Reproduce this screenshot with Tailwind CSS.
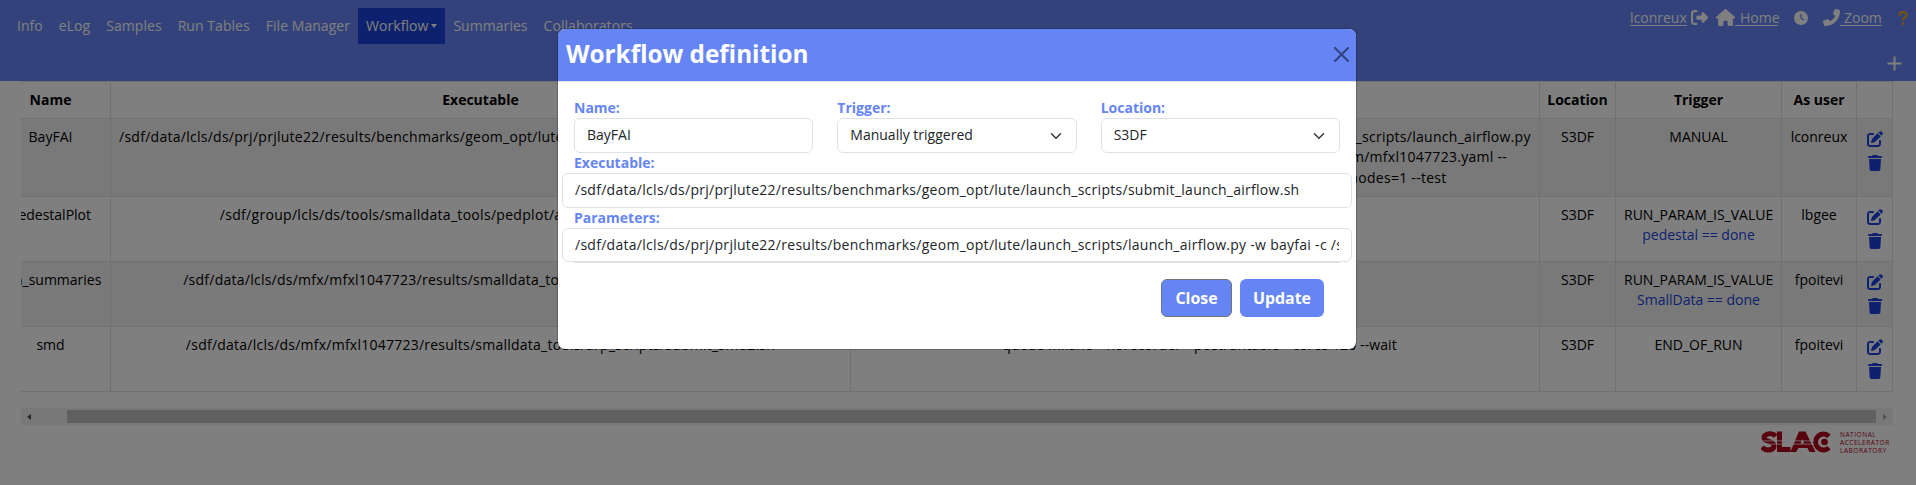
<!DOCTYPE html>
<html lang="en">
<head>
<meta charset="utf-8">
<title>Workflow definitions</title>
<script src="https://cdn.jsdelivr.net/npm/@tailwindcss/browser@4"></script>
</head>
<body class="bg-white">
<svg class="hidden">
  <symbol id="edit" viewBox="0 0 512 512"><path d="M471.6 21.7c-21.9-21.9-57.3-21.9-79.2 0L362.3 51.7l97.9 97.9 30.1-30.1c21.9-21.9 21.9-57.3 0-79.2L471.6 21.7zm-299.2 220c-6.1 6.1-10.8 13.6-13.5 21.9l-29.6 88.8c-2.9 8.6-.6 18.1 5.8 24.6s15.9 8.7 24.6 5.8l88.8-29.6c8.2-2.7 15.7-7.4 21.9-13.5L437.7 172.3 339.7 74.3 172.4 241.7zM96 64C43 64 0 107 0 160V416c0 53 43 96 96 96H352c53 0 96-43 96-96V320c0-17.7-14.3-32-32-32s-32 14.3-32 32v96c0 17.7-14.3 32-32 32H96c-17.7 0-32-14.3-32-32V160c0-17.7 14.3-32 32-32h96c17.7 0 32-14.3 32-32s-14.3-32-32-32H96z"/></symbol>
  <symbol id="trash" viewBox="0 0 448 512"><path d="M135.2 17.7L128 32H32C14.3 32 0 46.3 0 64S14.3 96 32 96H416c17.7 0 32-14.3 32-32s-14.3-32-32-32H320l-7.2-14.3C307.4 6.8 296.3 0 284.2 0H163.8c-12.1 0-23.2 6.8-28.6 17.7zM416 128H32L53.2 467c1.6 25.3 22.6 45 47.9 45H346.9c25.3 0 46.3-19.7 47.9-45L416 128z"/></symbol>
</svg>
<div class="relative h-[485px] w-full overflow-hidden font-['Open_Sans','Noto_Sans',sans-serif] text-[14px] leading-[20.3px] text-black">

  <!-- Navigation bar -->
  <nav class="flex h-[81px] items-start justify-between bg-[#6685f5] text-white">
    <div class="flex pt-2 pl-[9px] tracking-[0.05px]">
      <span class="px-2 py-[8px]">Info</span>
      <span class="px-2 py-[8px]">eLog</span>
      <span class="px-2 py-[8px]">Samples</span>
      <span class="px-2 py-[8px]">Run Tables</span>
      <span class="px-2 py-[8px]">File Manager</span>
      <span class="flex h-[36px] items-center gap-[3px] bg-[#1c43dc] px-2"><span>Workflow</span><span class="border-x-[3.5px] border-t-4 border-x-transparent border-t-white"></span></span>
      <span class="px-2 py-[8px]">Summaries</span>
      <span class="px-2 py-[8px]">Collaborators</span>
    </div>
    <div class="flex w-[290px] flex-col pt-[9px]">
      <div class="flex items-center">
        <span class="ml-1 h-[17px] w-[57px] border-b border-white leading-[18px]">lconreux</span>
        <svg class="ml-[4px] h-[17px] w-[17px] fill-white" viewBox="0 0 512 512"><path d="M377.9 105.9L500.7 228.7c7.2 7.2 11.3 17.1 11.3 27.3s-4.1 20.1-11.3 27.3L377.9 406.1c-6.4 6.4-15 9.9-24 9.9c-18.7 0-33.9-15.2-33.9-33.9l0-62.1-128 0c-17.7 0-32-14.3-32-32l0-64c0-17.7 14.3-32 32-32l128 0 0-62.1c0-18.7 15.2-33.9 33.9-33.9c9 0 17.6 3.6 24 9.9zM160 96L96 96c-17.7 0-32 14.3-32 32l0 256c0 17.7 14.3 32 32 32l64 0c17.7 0 32 14.3 32 32s-14.3 32-32 32l-64 0c-53 0-96-43-96-96L0 128C0 75 43 32 96 32l64 0c17.7 0 32 14.3 32 32s-14.3 32-32 32z"/></svg>
        <svg class="ml-[8px] h-[17px] w-[19px] fill-white" viewBox="0 0 576 512"><path d="M575.8 255.5c0 18-15 32.1-32 32.1h-32l.7 160.2c0 2.7-.2 5.4-.5 8.1V472c0 22.1-17.9 40-40 40H456c-1.1 0-2.2 0-3.3-.1c-1.4 .1-2.8 .1-4.2 .1H416 392c-22.1 0-40-17.9-40-40V448 384c0-17.7-14.3-32-32-32H256c-17.7 0-32 14.3-32 32v64 24c0 22.1-17.9 40-40 40H160 128.1c-1.5 0-3-.1-4.5-.2c-1.2 .1-2.4 .2-3.6 .2H104c-22.1 0-40-17.9-40-40V360c0-.9 0-1.9 .1-2.8V287.6H32c-18 0-32-14-32-32.1c0-9 3-17 10-24L266.4 8c7-7 15-8 22-8s15 2 21 7L564.8 231.5c8 7 12 15 11 24z"/></svg>
        <span class="h-[17px] w-[43px] border-b border-white pl-[5px] leading-[18px]">Home</span>
        <svg class="ml-[16px] h-[14px] w-[14px] fill-white" viewBox="0 0 512 512"><path d="M256 0a256 256 0 1 1 0 512A256 256 0 1 1 256 0zM232 120V256c0 8 4 15.5 10.7 20l96 64c11 7.4 25.9 4.4 33.3-6.7s4.4-25.9-6.7-33.3L280 243.2V120c0-13.3-10.7-24-24-24s-24 10.7-24 24z"/></svg>
        <svg class="ml-[15px] h-[17px] w-[17px] -scale-x-100 fill-white" viewBox="0 0 512 512"><path d="M164.9 24.6c-7.7-18.6-28-28.5-47.4-23.2l-88 24C12.1 30.2 0 46 0 64C0 311.4 200.6 512 448 512c18 0 33.8-12.1 38.6-29.5l24-88c5.3-19.4-4.6-39.7-23.2-47.4l-96-40c-16.3-6.8-35.2-2.1-46.3 11.6L304.7 368C234.3 334.7 177.3 277.7 144 207.3L193.3 167c13.7-11.2 18.4-30 11.6-46.3l-40-96z"/></svg>
        <span class="h-[17px] w-[42px] border-b border-white pl-[4px] leading-[18px]">Zoom</span>
        <svg class="ml-[16px] h-[16px] w-[10px] fill-[#fba400]" viewBox="0 0 320 512"><path d="M80 160c0-35.3 28.7-64 64-64h32c35.3 0 64 28.7 64 64v3.6c0 21.8-11.1 42.1-29.4 53.8l-42.2 27.1c-25.2 16.2-40.4 44.1-40.4 74V320c0 17.7 14.3 32 32 32s32-14.3 32-32v-1.4c0-8.2 4.2-15.8 11-20.2l42.2-27.1c36.6-23.6 58.8-64.1 58.8-107.7V160c0-70.7-57.3-128-128-128H144C73.3 32 16 89.3 16 160c0 17.7 14.3 32 32 32s32-14.3 32-32zm80 320a40 40 0 1 0 0-80 40 40 0 1 0 0 80z"/></svg>
      </div>
      <svg class="mt-[30px] ml-[261px] h-[15px] w-[15px] fill-none stroke-white stroke-2" viewBox="0 0 15 15"><path d="M7.5 .5v14M.5 7.5h14"/></svg>
    </div>
  </nav>

  <!-- Definitions table, scrolled sideways -->
  <div class="ml-[21px] w-[1872px] overflow-hidden">
    <table class="-ml-[30px] w-[1902px] table-fixed border-separate border-spacing-0 border-t border-[#dee2e6] text-center [&_td]:border-r [&_td]:border-b [&_td]:border-[#dee2e6] [&_td]:p-2 [&_td]:align-top [&_th]:border-r [&_th]:border-b [&_th]:border-[#dee2e6] [&_td]:whitespace-nowrap">
      <colgroup><col class="w-[120px]"><col class="w-[740px]"><col class="w-[689px]"><col class="w-[76px]"><col class="w-[166px]"><col class="w-[75px]"><col class="w-[36px]"></colgroup>
      <tr class="h-[37px] font-bold"><th>Name</th><th>Executable</th><th>Parameters</th><th>Location</th><th>Trigger</th><th>As user</th><th></th></tr>
      <tr class="h-[78px] bg-[#f2f2f2]">
        <td>BayFAI</td>
        <td><span class="tracking-[0.27px]">/sdf/data/lcls/ds/prj/prjlute22/results/benchmarks/geom_opt/lute/launch_scripts/submit_launch_airflow.sh</span></td>
        <td class="tracking-[0.28px]">/sdf/data/lcls/ds/prj/prjlute22/results/benchmarks/geom_opt/lute/launch_scripts/launch_airflow.py<br>-w bayfai -c /sdf/data/lcls/ds/mfx/mfxl1047723/results/benchmarks/ym/mfxl1047723.yaml --<br>partition=milano --account=lcls:mfxl1047723 --ntasks=101 --nodes=1 --test</td>
        <td>S3DF</td><td>MANUAL</td><td>lconreux</td>
        <td class="leading-none"><div class="flex flex-col items-center gap-[8px] pt-[4px]"><svg class="h-4 w-4 shrink-0 fill-[#1c43dc]"><use href="#edit"/></svg><svg class="h-4 w-[14px] shrink-0 fill-[#1c43dc]"><use href="#trash"/></svg></div></td>
      </tr>
      <tr class="h-[65px]">
        <td>PedestalPlot</td>
        <td><span class="tracking-[0.3px]">/sdf/group/lcls/ds/tools/smalldata_tools/pedplot/arp_scripts/submit_plots.sh</span></td>
        <td></td>
        <td>S3DF</td><td>RUN_PARAM_IS_VALUE<br><span class="text-[#1c43dc]">pedestal == done</span></td><td>lbgee</td>
        <td class="leading-none"><div class="flex flex-col items-center gap-[8px] pt-[4px]"><svg class="h-4 w-4 shrink-0 fill-[#1c43dc]"><use href="#edit"/></svg><svg class="h-4 w-[14px] shrink-0 fill-[#1c43dc]"><use href="#trash"/></svg></div></td>
      </tr>
      <tr class="h-[65px] bg-[#f2f2f2]">
        <td>run_summaries</td>
        <td><span class="tracking-[0.25px]">/sdf/data/lcls/ds/mfx/mfxl1047723/results/smalldata_tools/arp_scripts/submit_plots2.sh</span></td>
        <td></td>
        <td>S3DF</td><td>RUN_PARAM_IS_VALUE<br><span class="text-[#1c43dc]">SmallData == done</span></td><td>fpoitevi</td>
        <td class="leading-none"><div class="flex flex-col items-center gap-[8px] pt-[4px]"><svg class="h-4 w-4 shrink-0 fill-[#1c43dc]"><use href="#edit"/></svg><svg class="h-4 w-[14px] shrink-0 fill-[#1c43dc]"><use href="#trash"/></svg></div></td>
      </tr>
      <tr class="h-[65px]">
        <td>smd</td>
        <td><span class="tracking-[0.24px]">/sdf/data/lcls/ds/mfx/mfxl1047723/results/smalldata_tools/arp_scripts/submit_smd2.sh</span></td>
        <td class="tracking-[0.1px]">--queue milano --norecorder --postruntable --cores 120 --wait</td>
        <td>S3DF</td><td>END_OF_RUN</td><td>fpoitevi</td>
        <td class="leading-none"><div class="flex flex-col items-center gap-[8px] pt-[4px]"><svg class="h-4 w-4 shrink-0 fill-[#1c43dc]"><use href="#edit"/></svg><svg class="h-4 w-[14px] shrink-0 fill-[#1c43dc]"><use href="#trash"/></svg></div></td>
      </tr>
    </table>
  </div>

  <!-- Horizontal scrollbar -->
  <div class="mt-[16px] ml-[21px] flex h-[17px] w-[1872px] items-center bg-[#f1f1f1]">
    <div class="flex w-[46px] pl-[6px]"><span class="border-y-[3.5px] border-r-4 border-y-transparent border-r-[#505050]"></span></div>
    <div class="h-[13px] flex-1 bg-[#c1c1c1]"></div>
    <div class="flex w-[17px] pl-[7px]"><span class="border-y-[3.5px] border-l-4 border-y-transparent border-l-[#a3a3a3]"></span></div>
  </div>

  <!-- Laboratory logo -->
  <div class="mt-[6px] flex justify-end gap-[8px] pr-[24px] text-[#b1001c]">
    <svg class="h-[22px] w-[71px]" viewBox="0 0 71 22">
      <g fill="none" stroke="currentColor" stroke-width="5">
        <path d="M14.800 5.200C12.500 2.500 8.500 2.300 5.800 3.300C2 4.500 2.200 8.500 5.500 9.500L10.500 11.500C14 13 13.500 17.500 10 18.500C6.500 19.500 3 18.500 1 16.200"/>
        <path d="M18.500 .5V18.500H29.500"/>
        <path d="M68 5.200A8 8 0 1 0 68 16.800"/>
      </g>
      <path fill="currentColor" d="M38 .5H44.500L54.500 21H48.500L46.500 17H37.200L35.300 21H29.300ZM41.300 8L39.500 12.500H43.300Z"/>
      <path stroke="white" stroke-width=".8" d="M0 9.900H53M0 13.100H53"/>
      <circle cx="63.500" cy="11" r="3.300" fill="currentColor"/>
    </svg>
    <div class="flex w-[52px] flex-col text-[6.5px] leading-[8px] tracking-[0.55px]"><span>NATIONAL</span><span>ACCELERATOR</span><span>LABORATORY</span></div>
  </div>

  <!-- Modal -->
  <div class="absolute inset-0 flex items-start justify-center bg-black/50 pt-[28px]">
    <div class="mr-[2px] h-[322px] w-[800px] rounded-lg border border-black/20 bg-white bg-clip-padding text-[#212529]">
      <div class="flex h-[53px] items-center justify-between rounded-t-[7px] border-b border-[#dee2e6] bg-[#6685f5] pr-[7px] pb-[2px] pl-[8px]">
        <h5 class="text-[24.3px] font-bold text-white">Workflow definition</h5>
        <svg class="h-[15px] w-[15px] fill-none stroke-black stroke-2 opacity-50" viewBox="0 0 15 15"><path d="M1 1l13 13M14 1L1 14" stroke-linecap="round"/></svg>
      </div>
      <div class="px-4 pt-4">
        <div class="grid grid-cols-3 gap-[24px]">
          <div><label class="block font-bold text-[#6685f5]">Name:</label><div class="flex h-[34.6px] items-center rounded-md border border-[#dee2e6] px-3">BayFAI</div></div>
          <div><label class="block font-bold text-[#6685f5]">Trigger:</label><div class="flex h-[34.6px] items-center justify-between rounded-md border border-[#dee2e6] pr-[14px] pl-3"><span>Manually triggered</span><svg class="h-3 w-3 fill-none stroke-[#343a40] stroke-2" viewBox="0 0 16 16"><path stroke-linecap="round" stroke-linejoin="round" d="m2 5 6 6 6-6"/></svg></div></div>
          <div><label class="block font-bold text-[#6685f5]">Location:</label><div class="flex h-[34.6px] items-center justify-between rounded-md border border-[#dee2e6] pr-[14px] pl-3"><span>S3DF</span><svg class="h-3 w-3 fill-none stroke-[#343a40] stroke-2" viewBox="0 0 16 16"><path stroke-linecap="round" stroke-linejoin="round" d="m2 5 6 6 6-6"/></svg></div></div>
        </div>
        <label class="block font-bold text-[#6685f5]">Executable:</label>
        <div class="-mx-3 flex h-[34.6px] items-center rounded-md border border-[#dee2e6] px-3"><span class="whitespace-nowrap tracking-[0.28px]">/sdf/data/lcls/ds/prj/prjlute22/results/benchmarks/geom_opt/lute/launch_scripts/submit_launch_airflow.sh</span></div>
        <label class="block font-bold text-[#6685f5]">Parameters:</label>
        <div class="-mx-3 flex h-[34px] items-center rounded-md border border-[#dee2e6] px-3"><div class="overflow-hidden whitespace-nowrap tracking-[0.28px]">/sdf/data/lcls/ds/prj/prjlute22/results/benchmarks/geom_opt/lute/launch_scripts/launch_airflow.py -w bayfai -c /sdf/data</div></div>
        <div class="h-px bg-[#dee2e6]"></div>
        <div class="mt-[16px] flex justify-end gap-2 pr-4 text-[15.9px] font-bold text-white">
          <button class="h-[38px] w-[71px] rounded-md border border-[#6c757d] bg-[#6685f5]">Close</button>
          <button class="h-[38px] w-[84px] rounded-md bg-[#6685f5]">Update</button>
        </div>
      </div>
    </div>
  </div>
</div>
</body>
</html>
